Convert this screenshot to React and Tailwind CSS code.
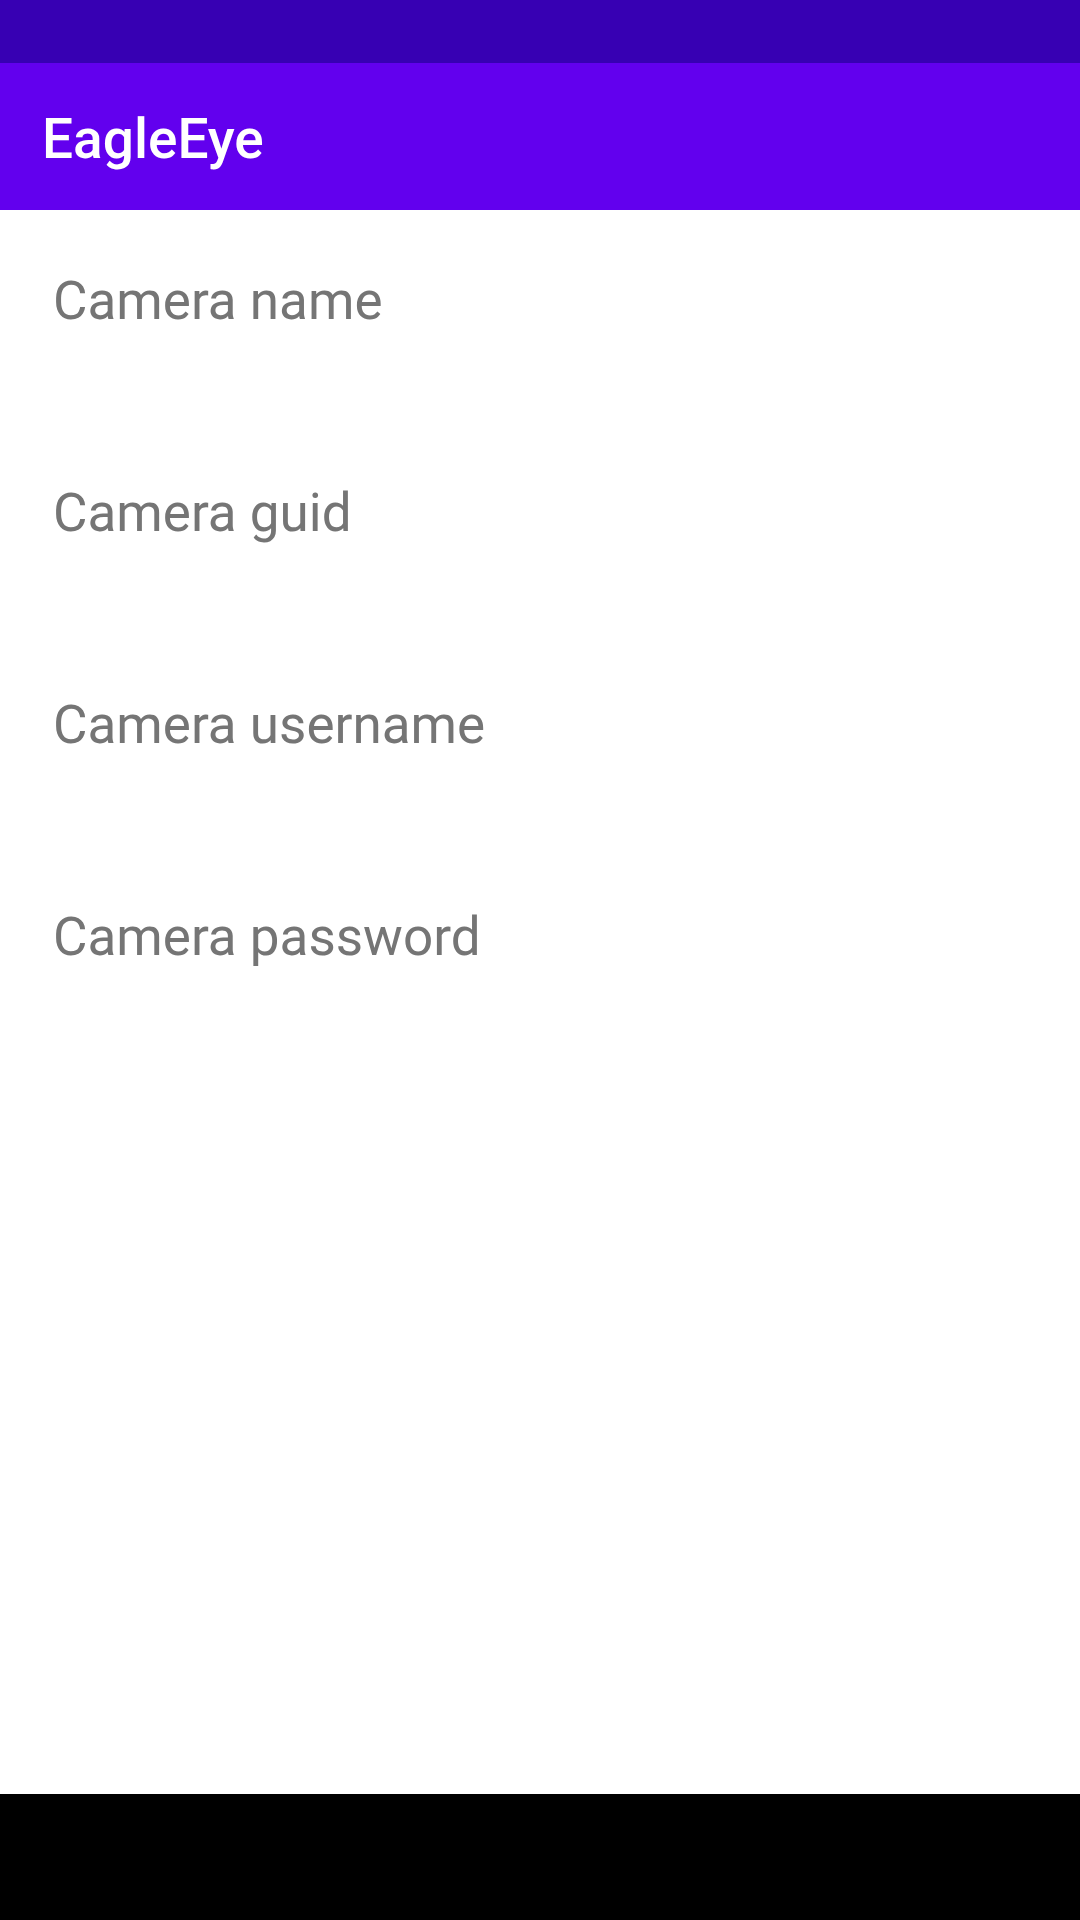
export default function App() {
  const fields = ["Camera name", "Camera guid", "Camera username", "Camera password"];
  return (
    <div className="flex flex-col w-[1080px] h-[1920px] bg-white" style={{ fontFamily: "Roboto, 'Noto Sans', sans-serif" }}>
      <div className="h-[63px] bg-[#3700B3] shrink-0" />
      <div className="h-[147px] bg-[#6200EE] shrink-0 flex items-center pl-[42px] pt-[4px]">
        <span className="text-white text-[55px] leading-[64px] font-medium">EagleEye</span>
      </div>
      <div className="flex-1 flex flex-col pt-[61px] pl-[53px]">
        {fields.map((f) => (
          <div key={f} className="h-[212px] shrink-0">
            <div className="text-[#757575] text-[53px] leading-[61px]">{f}</div>
          </div>
        ))}
      </div>
      <div className="h-[126px] bg-black shrink-0" />
    </div>
  );
}
